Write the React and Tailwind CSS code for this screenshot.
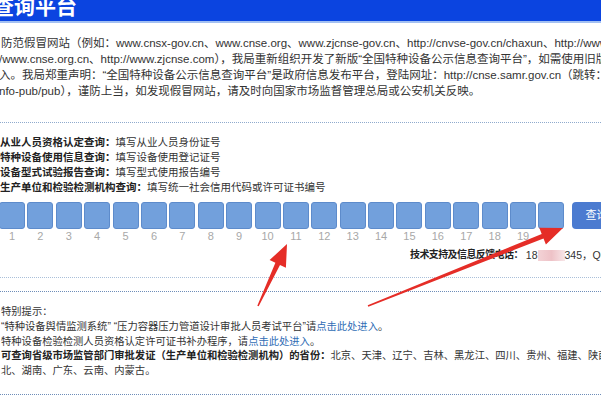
import React from 'react'

const font = { fontFamily: '"Liberation Sans", "Noto Sans CJK SC", sans-serif' }

const queryLines = [
  ['从业人员资格认定查询：', '填写从业人员身份证号'],
  ['特种设备使用信息查询：', '填写设备使用登记证号'],
  ['设备型式试验报告查询：', '填写型式使用报告编号'],
  ['生产单位和检验检测机构查询：', '填写统一社会信用代码或许可证书编号'],
]

const boxes = Array.from({ length: 20 }, (_, i) => i + 1)

const Arrows = () => (
  <svg className="absolute left-0 top-0 pointer-events-none" width="601" height="400">
    <polygon
      fill="#e52d27"
      points="257.3,305.7 275.4,262.8 269.6,260.1 287,244 285.9,267.7 280,265 258.7,306.3"
    />
    <polygon
      fill="#e52d27"
      points="367.7,305.3 541.7,233.9 539.3,227.8 563,228 545.9,244.6 543.5,238.5 368.3,306.7"
    />
  </svg>
)

const App = () => {
  return (
    <div className="relative w-[601px] h-[400px] overflow-hidden bg-white text-[#333]" style={font}>
      {/* header */}
      <div className="h-[21px] bg-[#0b44e0] overflow-hidden">
        <div className="-mt-[4px] -ml-[7px] text-[21px] leading-[21px] font-bold text-white whitespace-nowrap">
          查询平台
        </div>
      </div>
      <div className="h-[2px] bg-[#a3c0f2]" />

      {/* notice */}
      <div className="pt-[12px] pl-[1px] text-[11.5px] leading-[16px] whitespace-nowrap">
        <div>防范假冒网站（例如：www.cnsx-gov.cn、www.cnse.org、www.zjcnse-gov.cn、http://cnvse-gov.cn/chaxun、http://www.</div>
        <div className="-ml-[2px]">/www.cnse.org.cn、http://www.zjcnse.com），我局重新组织开发了新版“全国特种设备公示信息查询平台”，如需使用旧版</div>
        <div className="-ml-[2px]">入。我局郑重声明：“全国特种设备公示信息查询平台”是政府信息发布平台，登陆网址：http://cnse.samr.gov.cn（跳转：</div>
        <div className="-ml-[2px]">nfo-pub/pub），谨防上当，如发现假冒网站，请及时向国家市场监督管理总局或公安机关反映。</div>
      </div>

      <div className="mt-[23px] border-t border-dotted border-[#8faacd]" />

      {/* query hints */}
      <div className="pt-[12px] text-[10.5px] leading-[15px] whitespace-nowrap">
        {queryLines.map(([label, value]) => (
          <div key={label}>
            <span className="font-bold text-[#222]">{label}</span>
            <span>{value}</span>
          </div>
        ))}
      </div>

      {/* input boxes */}
      <div className="mt-[7px] -ml-[1px] flex items-center">
        <div className="flex gap-[2.4px]">
          {boxes.map((n) => (
            <div key={n} className="w-[26px] h-[27px] rounded-[3px] bg-[#72a0dc] border border-[#5d8bcb]" />
          ))}
        </div>
        <button className="ml-[8px] w-[70px] h-[27px] rounded-[4px] bg-[#4b7bd0] text-white text-[11px] text-left pl-[13px] shrink-0">
          查询
        </button>
      </div>
      <div className="-ml-[1px] flex gap-[2.4px] text-[11px] leading-[14px] text-[#a8a8a8]">
        {boxes.map((n) => (
          <div key={n} className="w-[26px] text-center">{n < 20 ? n : ''}</div>
        ))}
      </div>

      {/* support line */}
      <div className="mt-[5px] pl-[410px] text-[10.5px] leading-[14px] whitespace-nowrap flex items-center">
        <span className="shrink-0 text-[10px] tracking-[-0.6px] font-bold text-[#222]">技术支持及信息反馈电话：</span>
        <span className="shrink-0 ml-[3px]">18</span>
        <span className="shrink-0 inline-block w-[27px] h-[11px] bg-gradient-to-r from-[#f3d3d6] via-[#eec2c7] to-[#f7e6e8]" />
        <span className="shrink-0">345，QQ</span>
      </div>

      <div className="mt-[15px] border-t border-dotted border-[#a9bfd9]" />
      <div className="mt-[13px] border-t border-dotted border-[#6e8db8]" />

      {/* special notes */}
      <div className="pt-[13px] pl-[1px] text-[10.3px] leading-[14.75px] whitespace-nowrap">
        <div>特别提示：</div>
        <div>“特种设备舆情监测系统” “压力容器压力管道设计审批人员考试平台”请<span className="text-[#2f6db5]">点击此处进入</span>。</div>
        <div>特种设备检验检测人员资格认定许可证书补办程序，请<span className="text-[#2f6db5]">点击此处进入</span>。</div>
        <div>
          <span className="font-bold text-[#222]">可查询省级市场监管部门审批发证（生产单位和检验检测机构）的省份：</span>
          北京、天津、辽宁、吉林、黑龙江、四川、贵州、福建、陕西、
        </div>
        <div>北、湖南、广东、云南、内蒙古。</div>
      </div>

      <div className="mt-[15px] border-t border-dotted border-[#6e8db8]" />

      <Arrows />
    </div>
  )
}

export default App
